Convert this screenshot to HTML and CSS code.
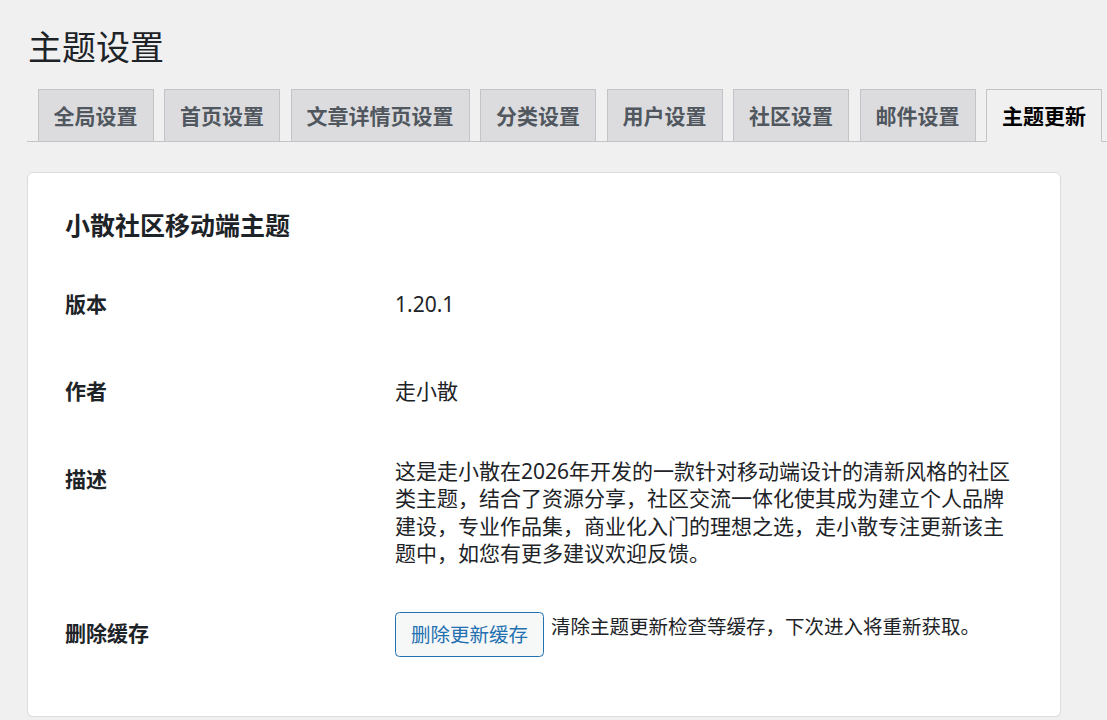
FILE: index.html
```html
<!DOCTYPE html>
<html lang="zh-CN">
  <head>
    <meta charset="UTF-8" />
    <meta name="viewport" content="width=device-width, initial-scale=1.0" />
    <title>主题设置</title>
    <link rel="stylesheet" href="styles.css">
  </head>
  <body>
    <div class="wrap">
      <h1>主题设置</h1>
      <nav class="nav-tab-wrapper">
        <a class="nav-tab" href="#">全局设置</a>
        <a class="nav-tab" href="#">首页设置</a>
        <a class="nav-tab" href="#">文章详情页设置</a>
        <a class="nav-tab" href="#">分类设置</a>
        <a class="nav-tab" href="#">用户设置</a>
        <a class="nav-tab" href="#">社区设置</a>
        <a class="nav-tab" href="#">邮件设置</a>
        <a class="nav-tab nav-tab-active" href="#">主题更新</a>
      </nav>

      <!-- 主题信息 -->
      <div class="card">
        <h2>小散社区移动端主题</h2>
        <table class="form-table">
          <tr>
            <th>版本</th>
            <td>1.20.1</td>
          </tr>
          <tr>
            <th>作者</th>
            <td>走小散</td>
          </tr>
          <tr>
            <th>描述</th>
            <td class="desc">这是走小散在2026年开发的一款针对移动端设计的清新风格的社区类主题，结合了资源分享，社区交流一体化使其成为建立个人品牌建设，专业作品集，商业化入门的理想之选，走小散专注更新该主题中，如您有更多建议欢迎反馈。</td>
          </tr>
          <tr>
            <th>删除缓存</th>
            <td>
              <div class="cache-row">
                <button class="button" type="button">删除更新缓存</button>
                <span class="description">清除主题更新检查等缓存，下次进入将重新获取。</span>
              </div>
            </td>
          </tr>
        </table>
      </div>
    </div>
  </body>
</html>
```

FILE: styles.css
```css
body {
  margin: 0;
  padding: 0;
  background: #f0f0f1;
  color: #1d2327;
  font-family: "Noto Sans", "Noto Sans CJK SC", sans-serif;
  overflow: hidden;
}
.wrap {
  padding: 12px 0 0 27px;
}
h1 {
  margin: 0;
  padding: 13px 0 6px 1px;
  font-size: 34px;
  font-weight: 400;
  line-height: 45px;
}
.nav-tab-wrapper {
  display: flex;
  padding-top: 13px;
  border-bottom: 1px solid #c3c4c7;
}
.nav-tab {
  margin-left: 10.5px;
  margin-bottom: -1px;
  padding: 7.5px 15px;
  font-size: 21px;
  font-weight: 600;
  line-height: 36px;
  color: #50575e;
  background: #dcdcde;
  border: 1px solid #c3c4c7;
  text-decoration: none;
  white-space: nowrap;
}
.nav-tab-active {
  background: #f0f0f1;
  color: #000;
  border-bottom-color: #f0f0f1;
}
.card {
  box-sizing: border-box;
  width: 1034px;
  margin-top: 30px;
  padding: 36px 37px 36px;
  background: #fff;
  border: 1px solid #dcdcde;
  border-radius: 6px;
  box-shadow: 0 1px 1px rgba(0, 0, 0, 0.04);
}
.card h2 {
  margin: 0;
  font-size: 25px;
  font-weight: 600;
  line-height: 32px;
}
.form-table {
  margin-top: 20px;
  border-collapse: collapse;
  width: 100%;
  font-size: 21px;
  line-height: 1.3;
}
.form-table th {
  width: 300px;
  padding: 30px 15px 30px 0;
  text-align: left;
  vertical-align: top;
  font-weight: 600;
}
.form-table td {
  padding: 22.5px 15px;
  vertical-align: middle;
}
.form-table td.desc {
  vertical-align: top;
  padding-right: 0;
}
.cache-row {
  display: flex;
  align-items: flex-start;
}
.button {
  min-height: 45px;
  padding: 0 15px;
  font-family: inherit;
  font-size: 19.5px;
  line-height: 42px;
  color: #2271b1;
  background: #f6f7f7;
  border: 1px solid #2271b1;
  border-radius: 4.5px;
  cursor: pointer;
}
.description {
  margin-left: 7px;
  padding-top: 1px;
  font-size: 19.5px;
  line-height: 27px;
}
```
